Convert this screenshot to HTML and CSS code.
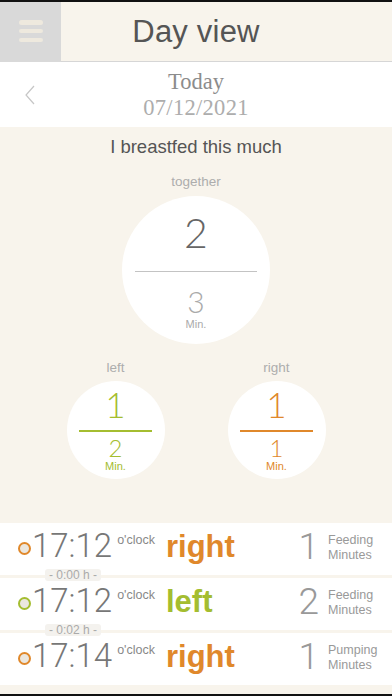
FILE: index.html
```html
<!DOCTYPE html>
<html lang="en">
<head>
<meta charset="utf-8">
<title>Day view</title>
<link rel="stylesheet" href="styles.css">
</head>
<body>
<div class="screen">
  <header class="topbar">
    <div class="menu-box">
      <span class="bar"></span><span class="bar"></span><span class="bar"></span>
    </div>
    <h1 class="title">Day view</h1>
    <div class="spacer"></div>
  </header>

  <section class="datebar">
    <svg class="chev" width="12" height="20" viewBox="0 0 12 20"><path d="M10 1 L2 10 L10 19" fill="none" stroke="#c6c6c6" stroke-width="1.2"/></svg>
    <div class="dates">
      <div class="today">Today</div>
      <div class="date">07/12/2021</div>
    </div>
  </section>

  <section class="summary">
    <h2 class="heading">I breastfed this much</h2>
    <div class="caption">together</div>
    <div class="circle big">
      <div class="num-top">2</div>
      <div class="rule"></div>
      <div class="num-bottom">3</div>
      <div class="unit">Min.</div>
    </div>
    <div class="sides">
      <div class="side">
        <div class="caption">left</div>
        <div class="circle small green">
          <div class="num-top">1</div>
          <div class="rule"></div>
          <div class="num-bottom">2</div>
          <div class="unit">Min.</div>
        </div>
      </div>
      <div class="side">
        <div class="caption">right</div>
        <div class="circle small orange">
          <div class="num-top">1</div>
          <div class="rule"></div>
          <div class="num-bottom">1</div>
          <div class="unit">Min.</div>
        </div>
      </div>
    </div>
  </section>

  <section class="entries">
    <div class="entry">
      <span class="dot orange-dot"></span>
      <span class="time">17:12</span>
      <span class="oclock">o'clock</span>
      <span class="which orange-text">right</span>
      <span class="amount">1</span>
      <span class="kind"><span>Feeding</span><span>Minutes</span></span>
    </div>
    <div class="entry">
      <span class="interval">- 0:00 h -</span>
      <span class="dot green-dot"></span>
      <span class="time">17:12</span>
      <span class="oclock">o'clock</span>
      <span class="which green-text">left</span>
      <span class="amount">2</span>
      <span class="kind"><span>Feeding</span><span>Minutes</span></span>
    </div>
    <div class="entry">
      <span class="interval">- 0:02 h -</span>
      <span class="dot orange-dot"></span>
      <span class="time">17:14</span>
      <span class="oclock">o'clock</span>
      <span class="which orange-text">right</span>
      <span class="amount">1</span>
      <span class="kind"><span>Pumping</span><span>Minutes</span></span>
    </div>
  </section>
</div>
</body>
</html>
```
FILE: styles.css
```css
* { box-sizing: border-box; }
html, body { margin: 0; padding: 0; }
body {
  background: #f8f4ec;
  font-family: "Liberation Sans", Arial, sans-serif;
}
.screen {
  width: 392px;
  height: 696px;
  border-top: 2px solid #111;
  border-bottom: 2px solid #111;
  display: flex;
  flex-direction: column;
  background: #f8f4ec;
  overflow: hidden;
}
.topbar {
  height: 60px;
  flex: none;
  display: grid;
  grid-template-columns: 61px 1fr 61px;
  background: #f8f4ec;
  border-bottom: 1px solid #d6d6d6;
}
.menu-box {
  background: #d9d9d9;
  display: flex;
  flex-direction: column;
  align-items: center;
  padding-top: 18px;
  gap: 4.3px;
}
.bar {
  width: 24px;
  height: 4.5px;
  border-radius: 3px;
  background: #eee9de;
}
.title {
  margin: 0;
  font-weight: normal;
  font-size: 31px;
  color: #555;
  text-align: center;
  line-height: 60px;
  letter-spacing: 0.2px;
}
.datebar {
  height: 65px;
  flex: none;
  background: #fff;
  position: relative;
  display: flex;
  justify-content: center;
}
.chev {
  position: absolute;
  left: 24px;
  top: 23px;
}
.dates {
  text-align: center;
  font-family: "Liberation Serif", "Times New Roman", serif;
  font-size: 22.5px;
  line-height: 26px;
  padding-top: 7px;
}
.today { color: #8c8c8c; }
.date { color: #adadad; letter-spacing: 0.3px; }

.summary {
  height: 395px;
  flex: none;
  display: flex;
  flex-direction: column;
  align-items: center;
  padding-top: 9px;
}
.heading {
  margin: 0;
  font-weight: normal;
  font-size: 18.5px;
  line-height: 22px;
  color: #555;
}
.caption {
  font-size: 13.5px;
  line-height: 16px;
  color: #adadad;
  text-align: center;
}
.summary > .caption { margin-top: 16px; }
.circle {
  background: #fff;
  border-radius: 50%;
  display: flex;
  flex-direction: column;
  align-items: center;
  font-family: Lato, "Open Sans", sans-serif;
  font-weight: 300;
}
.circle.big {
  width: 148px;
  height: 148px;
  margin-top: 6px;
  padding-top: 16px;
}
.big .num-top { font-size: 41px; line-height: 41px; color: #666; }
.big .rule { width: 122px; height: 1px; background: #c3c3c3; margin-top: 18px; }
.big .num-bottom { font-size: 30px; line-height: 26px; color: #aaa; margin-top: 16px; }
.big .unit { font-family: "Liberation Sans", Arial, sans-serif; font-size: 11px; line-height: 12px; color: #aaa; margin-top: 4px; }

.sides {
  display: flex;
  gap: 63px;
  margin-top: 16px;
}
.side {
  display: flex;
  flex-direction: column;
  align-items: center;
  gap: 5px;
}
.circle.small {
  width: 98px;
  height: 98px;
  padding-top: 6px;
}
.small .num-top { font-size: 35px; line-height: 35px; }
.small .rule { width: 73px; height: 2px; margin-top: 8px; }
.small .num-bottom { font-size: 24px; line-height: 18px; margin-top: 7px; }
.small .unit { font-family: "Liberation Sans", Arial, sans-serif; font-size: 11px; line-height: 11px; margin-top: 4px; }
.green { color: #a4bd30; }
.green .rule { background: #a4bd30; }
.orange { color: #e0882b; }
.orange .rule { background: #e0882b; }

.entries {
  flex: 1;
  display: flex;
  flex-direction: column;
  gap: 3px;
  padding-top: 1px;
}
.entry {
  position: relative;
  height: 52px;
  background: #fff;
  display: flex;
  align-items: flex-start;
  padding-left: 18px;
}
.interval {
  position: absolute;
  left: 45px;
  top: -9px;
  height: 12px;
  padding: 0 4px;
  background: #f4f2ee;
  color: #aaa;
  font-size: 12px;
  line-height: 12px;
  border-radius: 3px;
}
.dot {
  width: 13px;
  height: 13px;
  border-radius: 50%;
  background: #ebe7df;
  margin-top: 19px;
  margin-right: 1px;
  flex: none;
}
.orange-dot { border: 2px solid #e0882b; }
.green-dot { border: 2px solid #a4bd30; }
.time {
  font-family: Roboto, "Liberation Sans", sans-serif;
  font-weight: 300;
  font-size: 33px;
  line-height: 30px;
  color: #777;
  margin-top: 8px;
}
.oclock {
  font-size: 12.5px;
  line-height: 13px;
  color: #888;
  margin-top: 11px;
  margin-left: 5px;
}
.which {
  flex: 1;
  font-weight: bold;
  font-size: 31px;
  line-height: 31px;
  margin-top: 8px;
  margin-left: 11px;
}
.orange-text { color: #e0882b; }
.green-text { color: #a4bd30; }
.amount {
  font-family: Roboto, "Liberation Sans", sans-serif;
  font-weight: 300;
  font-size: 37px;
  line-height: 37px;
  color: #999;
  margin-top: 5px;
  margin-right: 9px;
}
.kind {
  width: 64px;
  display: flex;
  flex-direction: column;
  font-size: 12.5px;
  line-height: 15px;
  color: #999;
  margin-top: 10px;
}
```
